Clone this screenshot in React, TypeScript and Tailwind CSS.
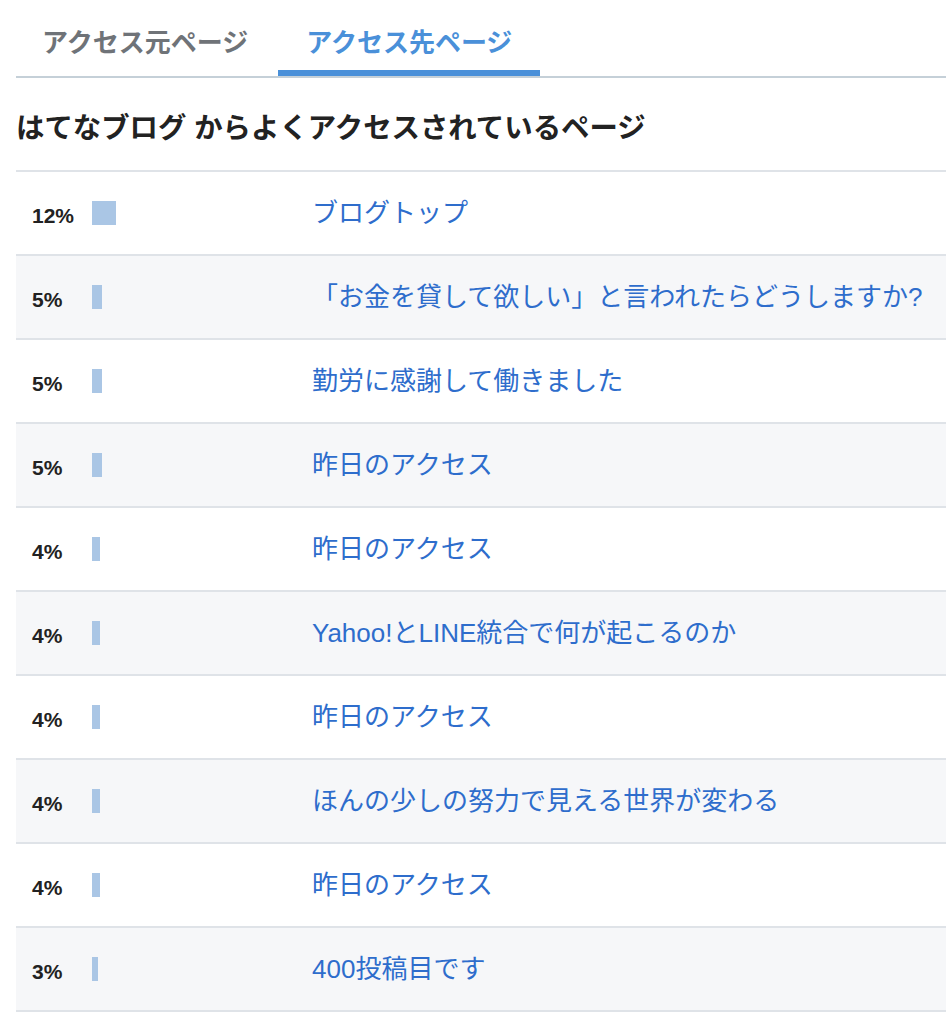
const rows = [
  { pct: 12, title: "ブログトップ" },
  { pct: 5, title: "「お金を貸して欲しい」と言われたらどうしますか?" },
  { pct: 5, title: "勤労に感謝して働きました" },
  { pct: 5, title: "昨日のアクセス" },
  { pct: 4, title: "昨日のアクセス" },
  { pct: 4, title: "Yahoo!とLINE統合で何が起こるのか" },
  { pct: 4, title: "昨日のアクセス" },
  { pct: 4, title: "ほんの少しの努力で見える世界が変わる" },
  { pct: 4, title: "昨日のアクセス" },
  { pct: 3, title: "400投稿目です" },
];

const font = {
  fontFamily: '"Liberation Sans", "Noto Sans CJK JP", sans-serif',
};

export default function App() {
  return (
    <div className="min-h-screen bg-white pl-4" style={font}>
      <div className="flex gap-[4px] border-b-2 border-[#c5d0d8]">
        <div className="border-b-[6px] border-transparent px-[26px] pb-[7px] pt-[24px] text-[26px] font-bold leading-[39px] text-[#6f7378]">
          アクセス元ページ
        </div>
        <div className="border-b-[6px] border-[#4a90d9] px-[28px] pb-[7px] pt-[24px] text-[26px] font-bold leading-[39px] text-[#4a90d9]">
          アクセス先ページ
        </div>
      </div>

      <h2 className="pb-[21px] pt-[29px] text-[28.4px] font-bold leading-[42px] text-[#222]">
        はてなブログ からよくアクセスされているページ
      </h2>

      <ul className="border-t-2 border-[#dfe3e8]">
        {rows.map((r, i) => (
          <li
            key={i}
            className={`flex h-[84px] items-center border-b-2 border-[#dfe3e8] pl-4 ${
              i % 2 === 1 ? "bg-[#f6f7f9]" : "bg-white"
            }`}
          >
            <span className="w-[60px] shrink-0 pt-[5px] text-[21px] font-bold text-[#222]">
              {r.pct}%
            </span>
            <span className="flex w-[220px] shrink-0 items-center">
              <span
                className="block h-[24px] bg-[#aac6e5]"
                style={{ width: r.pct * 2 }}
              />
            </span>
            <a className="text-[26px] leading-[39px] text-[#2e6dcc]" href="#">
              {r.title}
            </a>
          </li>
        ))}
      </ul>
    </div>
  );
}
